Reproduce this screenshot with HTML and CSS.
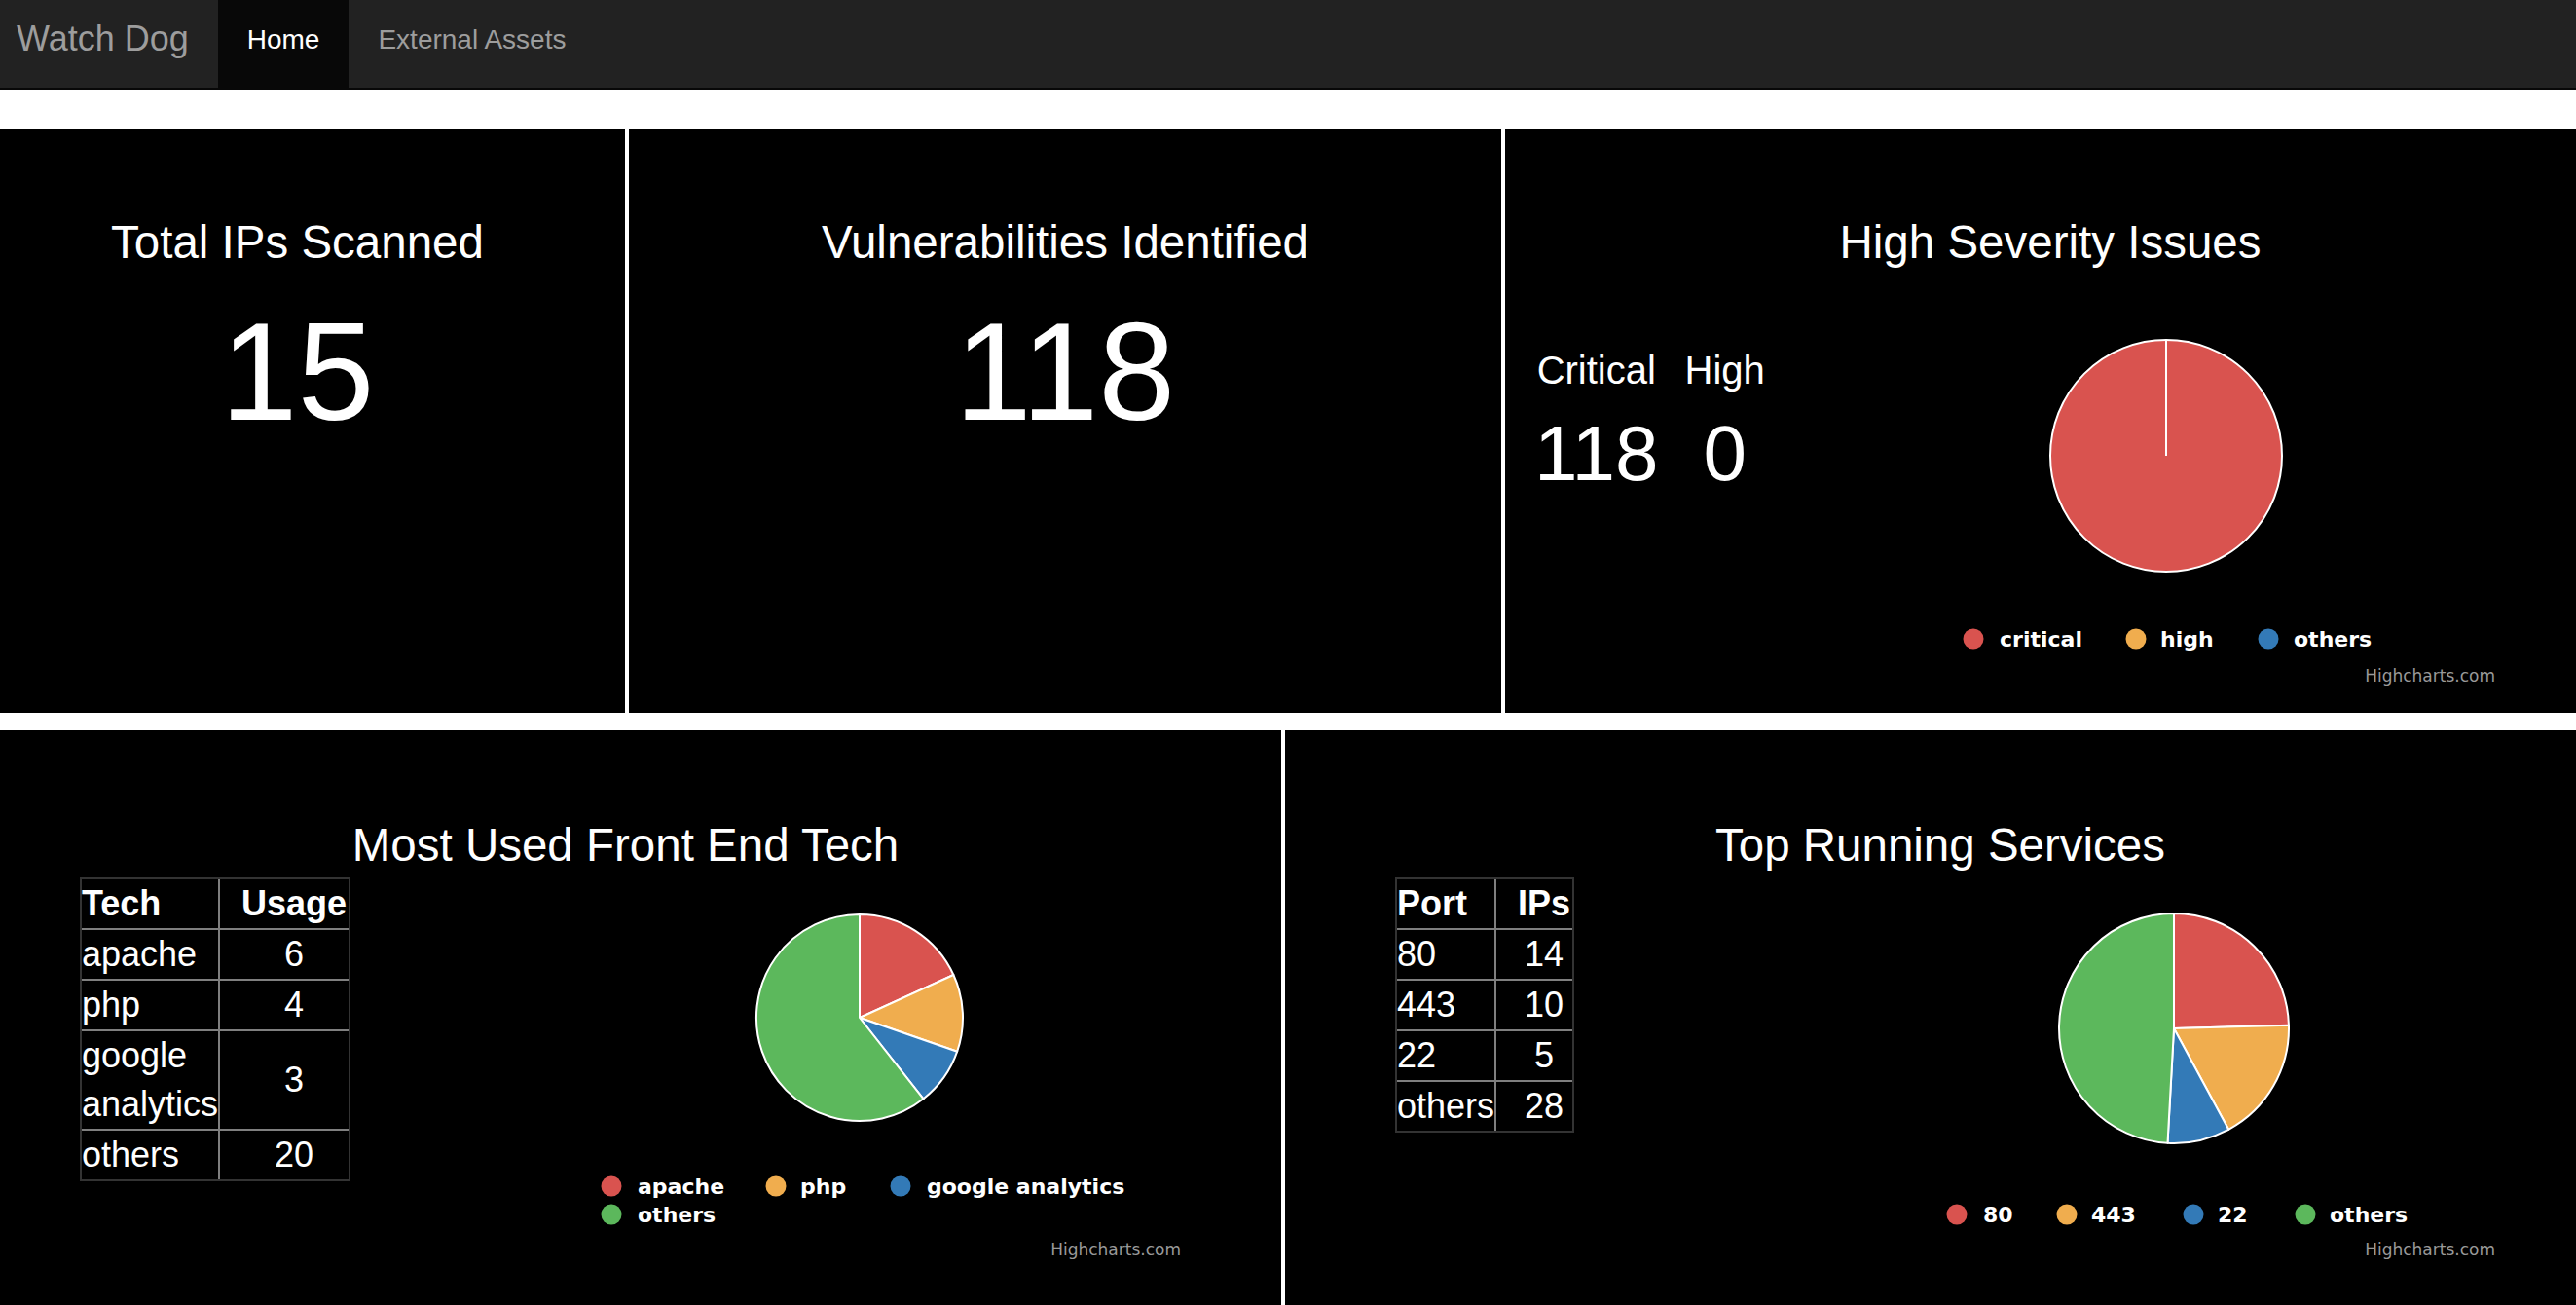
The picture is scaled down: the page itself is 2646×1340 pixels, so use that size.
FILE: index.html
```html
<!DOCTYPE html>
<html lang="en">
<head>
<meta charset="utf-8">
<title>Watch Dog</title>
<link rel="stylesheet" href="styles.css">
</head>
<body>
<nav class="navbar">
  <a class="brand" href="#">Watch Dog</a>
  <ul class="nav">
    <li class="active"><a href="#">Home</a></li>
    <li><a href="#">External Assets</a></li>
  </ul>
</nav>

<main class="dash">
  <div class="row row-top">
    <section class="panel stat">
      <h3>Total IPs Scanned</h3>
      <div class="big">15</div>
    </section>
    <section class="panel stat">
      <h3>Vulnerabilities Identified</h3>
      <div class="big">118</div>
    </section>
    <section class="panel sev">
      <h3>High Severity Issues</h3>
      <div class="sev-body">
        <div class="sev-grid">
          <span class="lbl">Critical</span><span class="lbl">High</span>
          <span class="val">118</span><span class="val">0</span>
        </div>
        <svg class="chart chart-sev" width="700" height="430" viewBox="0 0 700 430">
          <circle cx="350" cy="178" r="119" fill="#d9534f" stroke="#fff" stroke-width="2"/>
          <line x1="350" y1="178" x2="350" y2="59" stroke="#fff" stroke-width="2"/>
          <g class="legend">
            <circle cx="152" cy="366" r="10.5" fill="#d9534f"/><text x="179" y="373.5">critical</text>
            <circle cx="319" cy="366" r="10.5" fill="#f0ad4e"/><text x="344" y="373.5">high</text>
            <circle cx="455" cy="366" r="10.5" fill="#337ab7"/><text x="481" y="373.5">others</text>
          </g>
          <text class="credits" x="688" y="410" text-anchor="end">Highcharts.com</text>
        </svg>
      </div>
    </section>
  </div>

  <div class="row row-bottom">
    <section class="panel tech">
      <h3>Most Used Front End Tech</h3>
      <div class="panel-body">
        <table class="data">
          <tr><th>Tech</th><th>Usage</th></tr>
          <tr><td>apache</td><td>6</td></tr>
          <tr><td>php</td><td>4</td></tr>
          <tr><td>google<br>analytics</td><td>3</td></tr>
          <tr><td>others</td><td>20</td></tr>
        </table>
        <svg class="chart chart-tech" width="680" height="400" viewBox="0 0 680 400">
          <g stroke="#fff" stroke-width="2" stroke-linejoin="round">
            <path d="M340,144 L340,38 A106,106 0 0,1 436.4,100 Z" fill="#d9534f"/>
            <path d="M340,144 L436.4,100 A106,106 0 0,1 440.2,178.7 Z" fill="#f0ad4e"/>
            <path d="M340,144 L440.2,178.7 A106,106 0 0,1 405.5,227.3 Z" fill="#337ab7"/>
            <path d="M340,144 L405.5,227.3 A106,106 0 1,1 340,38 Z" fill="#5cb85c"/>
          </g>
          <g class="legend">
            <circle cx="85" cy="317" r="10.5" fill="#d9534f"/><text x="112" y="324.5">apache</text>
            <circle cx="254" cy="317" r="10.5" fill="#f0ad4e"/><text x="279" y="324.5">php</text>
            <circle cx="382" cy="317" r="10.5" fill="#337ab7"/><text x="409" y="324.5">google analytics</text>
            <circle cx="85" cy="346" r="10.5" fill="#5cb85c"/><text x="112" y="353.5">others</text>
          </g>
          <text class="credits" x="670" y="388" text-anchor="end">Highcharts.com</text>
        </svg>
      </div>
    </section>
    <section class="panel services">
      <h3>Top Running Services</h3>
      <div class="panel-body">
        <table class="data">
          <tr><th>Port</th><th>IPs</th></tr>
          <tr><td>80</td><td>14</td></tr>
          <tr><td>443</td><td>10</td></tr>
          <tr><td>22</td><td>5</td></tr>
          <tr><td>others</td><td>28</td></tr>
        </table>
        <svg class="chart chart-services" width="680" height="400" viewBox="0 0 680 400">
          <g stroke="#fff" stroke-width="2" stroke-linejoin="round">
            <path d="M340,155 L340,37 A118,118 0 0,1 457.96,151.75 Z" fill="#d9534f"/>
            <path d="M340,155 L457.96,151.75 A118,118 0 0,1 396.17,258.77 Z" fill="#f0ad4e"/>
            <path d="M340,155 L396.17,258.77 A118,118 0 0,1 333.5,272.82 Z" fill="#337ab7"/>
            <path d="M340,155 L333.5,272.82 A118,118 0 0,1 340,37 Z" fill="#5cb85c"/>
          </g>
          <g class="legend">
            <circle cx="117" cy="346" r="10.5" fill="#d9534f"/><text x="144" y="353.5">80</text>
            <circle cx="230" cy="346" r="10.5" fill="#f0ad4e"/><text x="255" y="353.5">443</text>
            <circle cx="360" cy="346" r="10.5" fill="#337ab7"/><text x="385" y="353.5">22</text>
            <circle cx="475" cy="346" r="10.5" fill="#5cb85c"/><text x="500" y="353.5">others</text>
          </g>
          <text class="credits" x="670" y="388" text-anchor="end">Highcharts.com</text>
        </svg>
      </div>
    </section>
  </div>
</main>
</body>
</html>
```

FILE: styles.css
```css
html, body {
  margin: 0;
  padding: 0;
  overflow: hidden;
  background: #fff;
  font-family: "Liberation Sans", Arial, Helvetica, sans-serif;
}

/* Navbar */
.navbar {
  display: flex;
  height: 90px;
  background: #222;
  border-bottom: 2px solid #080808;
}
.brand {
  display: block;
  padding: 0 30px 0 17px;
  font-size: 36px;
  line-height: 79px;
  color: #9d9d9d;
  text-decoration: none;
}
.nav {
  display: flex;
  list-style: none;
  margin: 0;
  padding: 0;
}
.nav a {
  display: block;
  height: 90px;
  padding: 0 30px;
  font-size: 28px;
  line-height: 81px;
  color: #9d9d9d;
  text-decoration: none;
}
.nav .active a {
  background: #080808;
  color: #fff;
}

/* Dashboard grid */
.dash {
  margin: 40px -20px 0 -31px;
}
.row {
  display: grid;
  gap: 4px;
}
.row-top {
  grid-template-columns: 673px 896px 1fr;
  height: 600px;
}
.row-bottom {
  grid-template-columns: 1347px 1fr;
  height: 700px;
  margin-top: 18px;
}

.panel {
  background: #000;
  color: #fff;
  text-align: center;
}
.panel h3 {
  margin: 0;
  padding-top: 91px;
  font-size: 47.5px;
  font-weight: normal;
  line-height: 52px;
}
.row-bottom .panel h3 {
  padding-top: 92px;
}

.big {
  margin-top: 36px;
  font-size: 142px;
  line-height: 142px;
}

/* Severity panel */
.sev-body {
  display: flex;
  align-items: flex-start;
  margin-top: 15px;
}
.sev-grid {
  display: grid;
  grid-template-columns: auto auto;
  column-gap: 27px;
  justify-items: center;
  margin: 68px 0 0 30px;
}
.lbl {
  font-size: 40px;
  line-height: 44px;
}
.val {
  padding-top: 23px;
  font-size: 80px;
  line-height: 81px;
}
.chart-sev {
  margin: 0 91px 0 auto;
}

/* Bottom panels */
.panel-body {
  display: flex;
  align-items: flex-start;
  margin-top: 7px;
}
.data {
  margin-left: 113px;
  border: 2px solid #333;
  border-spacing: 0;
  font-size: 36px;
  line-height: 50px;
  text-align: left;
  color: #fff;
}
.data th,
.data td {
  padding: 0;
  border-right: 2px solid #7f7f7f;
  border-bottom: 2px solid #7f7f7f;
}
.data tr > :last-child {
  border-right: 0;
  padding: 0 2px 0 22px;
  text-align: center;
}
.data tr:last-child > * {
  border-bottom: 0;
}
.data th {
  font-weight: bold;
}
.panel-body .chart {
  margin: 0 93px 0 auto;
}

/* Chart text */
.legend text {
  font-family: "DejaVu Sans", sans-serif;
  font-weight: bold;
  font-size: 22px;
  fill: #fff;
}
.credits {
  font-family: "DejaVu Sans", sans-serif;
  font-size: 17px;
  fill: #999;
}
```
